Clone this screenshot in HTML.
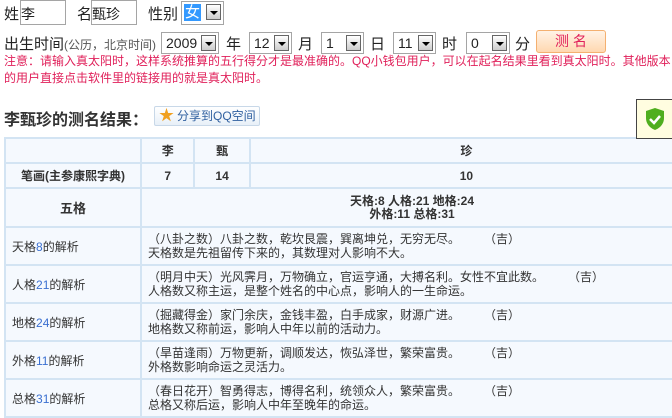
<!DOCTYPE html>
<html><head><meta charset="utf-8"><style>
*{margin:0;padding:0;box-sizing:border-box}
body{width:672px;height:413px;overflow:hidden;background:#fff;font-family:"Liberation Sans","Noto Sans CJK SC",sans-serif;font-size:13px;color:#222;position:relative}
.a{position:absolute;white-space:nowrap}
.inp{position:absolute;border:1px solid #a5a5a5;background:#fff;height:25px}
.sel{position:absolute;border:1px solid #a5a5a5;background:#fff;height:22px;font-size:14px;line-height:20px;padding-left:4px;color:#222}
.sel i{position:absolute;right:2px;top:2px;width:15px;height:16px;border:1px solid #666;background:linear-gradient(#fff,#ccc)}
.sel i:after{content:"";position:absolute;left:3px;top:6px;border-left:4px solid transparent;border-right:4px solid transparent;border-top:4px solid #000}
.red{color:#e0205a;font-size:12px}
table{position:absolute;left:4px;top:137px;border-collapse:collapse;background:#f5f9fe;width:680px}
td{border:2px solid #d3e4f3;color:#333;font-size:12px;padding:0 0 0 6px}
.c{text-align:center;font-weight:bold;padding:0}
.n{color:#3a6fd0}
</style></head><body>
<div class="a" style="left:4px;top:3px;font-size:15px">姓</div>
<div class="inp" style="left:20px;top:0;width:46px"></div>
<div class="a" style="left:21px;top:4px;font-size:14px">李</div>
<div class="a" style="left:77px;top:3px;font-size:15px">名</div>
<div class="inp" style="left:91px;top:0;width:46px"></div>
<div class="a" style="left:92px;top:4px;font-size:14px">甄珍</div>
<div class="a" style="left:148px;top:3px;font-size:15px">性别</div>
<div class="sel" style="left:181px;top:1px;width:43px;height:24px;padding-left:2px"><span style="background:#3399ff;color:#fff;font-size:15px;padding:0 1px">女</span><i></i></div>
<div class="a" style="left:4px;top:33px;font-size:15px">出生时间<span style="font-size:12px;color:#555">(公历，北京时间)</span></div>
<div class="sel" style="left:161px;top:32px;width:58px">2009<i></i></div>
<div class="a" style="left:226px;top:33px;font-size:15px">年</div>
<div class="sel" style="left:249px;top:32px;width:43px">12<i></i></div>
<div class="a" style="left:298px;top:33px;font-size:15px">月</div>
<div class="sel" style="left:321px;top:32px;width:43px">1<i></i></div>
<div class="a" style="left:370px;top:33px;font-size:15px">日</div>
<div class="sel" style="left:393px;top:32px;width:43px">11<i></i></div>
<div class="a" style="left:442px;top:33px;font-size:15px">时</div>
<div class="sel" style="left:466px;top:32px;width:44px">0<i></i></div>
<div class="a" style="left:515px;top:33px;font-size:15px">分</div>
<div class="a" style="left:536px;top:30px;width:70px;height:23px;border:1px solid #f4b070;border-radius:3px;background:linear-gradient(#fff3e6,#ffd8b0);color:#e0205a;font-size:14px;text-align:center;line-height:21px">测&nbsp;名</div>
<div class="a red" style="left:4px;top:53px;line-height:17px">注意：请输入真太阳时，这样系统推算的五行得分才是最准确的。QQ小钱包用户，可以在起名结果里看到真太阳时。其他版本<br>的用户直接点击软件里的链接用的就是真太阳时。</div>
<div class="a" style="left:4px;top:106px;font-size:16px;font-weight:bold;color:#333">李甄珍的测名结果：</div>
<div class="a" style="left:154px;top:106px;width:106px;height:20px;border:1px solid #c8d8e8;border-radius:2px;background:linear-gradient(#fff,#e8f0f8);font-size:12px;color:#3060a0;line-height:18px;padding-left:22px">分享到QQ空间<span style="position:absolute;left:4px;top:0;color:#f0a020;font-size:15px">★</span></div>
<table>
<tr style="height:25px"><td style="width:135px"></td><td class="c" style="width:53px">李</td><td class="c" style="width:55px">甄</td><td class="c" style="width:430px">珍</td></tr>
<tr style="height:25px"><td class="c">笔画(主参康熙字典)</td><td class="c">7</td><td class="c">14</td><td class="c">10</td></tr>
<tr style="height:39px"><td class="c" style="font-size:13px">五格</td><td colspan="3" class="c" style="line-height:13px">天格:8 人格:21 地格:24<br>外格:11 总格:31</td></tr>
<tr style="height:38px"><td>天格<span class="n">8</span>的解析</td><td colspan="3" style="line-height:14px">（八卦之数）八卦之数，乾坎艮震，巽离坤兑，无穷无尽。　　　（吉）<br>天格数是先祖留传下来的，其数理对人影响不大。</td></tr>
<tr style="height:38px"><td>人格<span class="n">21</span>的解析</td><td colspan="3" style="line-height:14px">（明月中天）光风霁月，万物确立，官运亨通，大搏名利。女性不宜此数。　　　（吉）<br>人格数又称主运，是整个姓名的中心点，影响人的一生命运。</td></tr>
<tr style="height:38px"><td>地格<span class="n">24</span>的解析</td><td colspan="3" style="line-height:14px">（掘藏得金）家门余庆，金钱丰盈，白手成家，财源广进。　　　（吉）<br>地格数又称前运，影响人中年以前的活动力。</td></tr>
<tr style="height:38px"><td>外格<span class="n">11</span>的解析</td><td colspan="3" style="line-height:14px">（旱苗逢雨）万物更新，调顺发达，恢弘泽世，繁荣富贵。　　　（吉）<br>外格数影响命运之灵活力。</td></tr>
<tr style="height:38px"><td>总格<span class="n">31</span>的解析</td><td colspan="3" style="line-height:14px">（春日花开）智勇得志，博得名利，统领众人，繁荣富贵。　　　（吉）<br>总格又称后运，影响人中年至晚年的命运。</td></tr>
</table>
<div class="a" style="left:636px;top:99px;width:40px;height:40px;background:#fffde0;border:1px solid #444"><svg width="22" height="24" viewBox="0 0 22 24" style="position:absolute;left:7px;top:7px"><path d="M11 1L20 4V11C20 17 16 21 11 23C6 21 2 17 2 11V4Z" fill="#4fae1e"/><path d="M6 12l4 4 6-7" stroke="#fff" stroke-width="2.5" fill="none"/></svg></div>
</body></html>
